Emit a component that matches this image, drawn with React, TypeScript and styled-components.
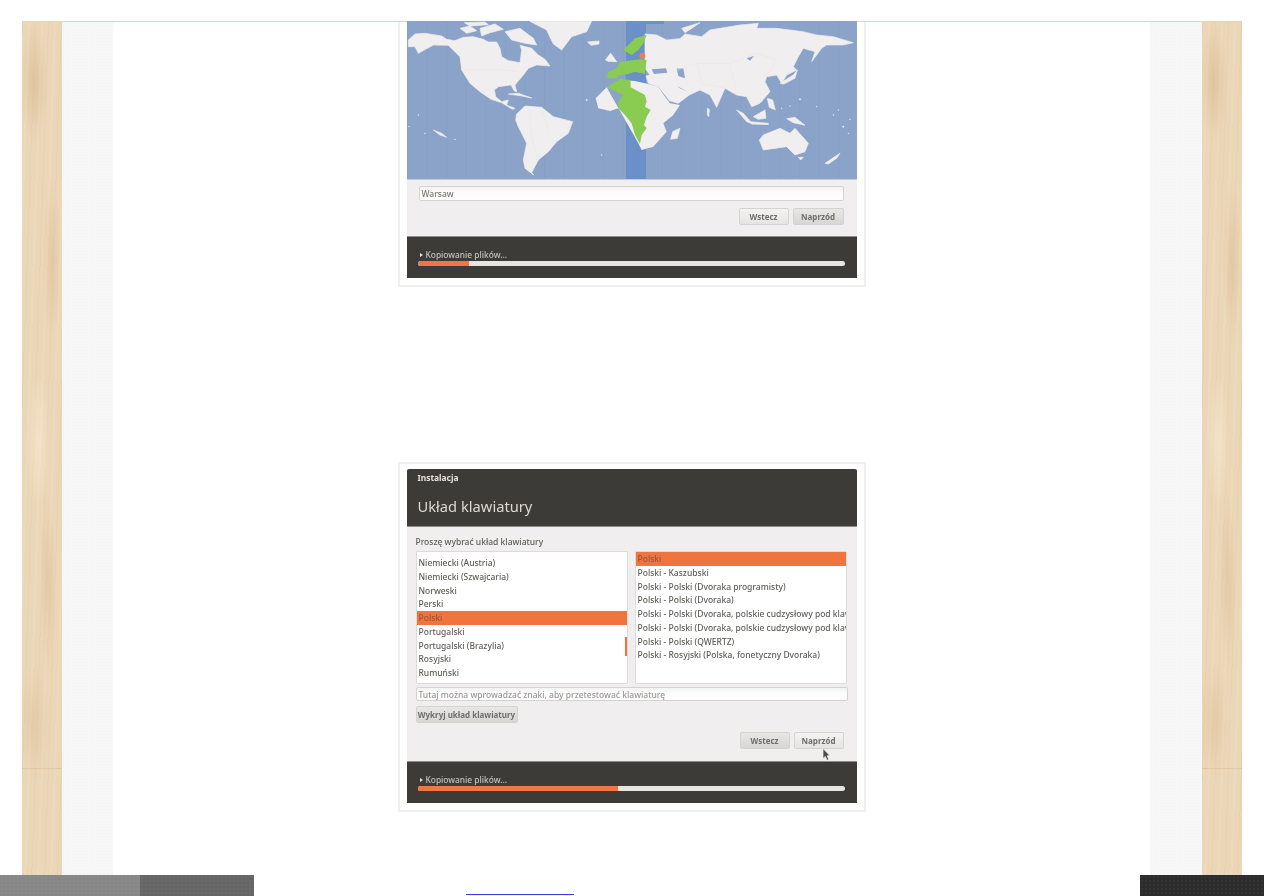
import React from "react";
import styled, { createGlobalStyle } from "styled-components";

const GlobalStyle = createGlobalStyle`
  html, body {
    margin: 0;
    padding: 0;
    background: #fff;
    overflow: hidden;
  }
`;

const woodTexture = `
  linear-gradient(180deg, transparent 0 746px, rgba(190,150,100,.22) 746px 747px, transparent 747px),
  radial-gradient(14px 60px at 30% 60px, rgba(205,170,125,.4), transparent),
  radial-gradient(10px 80px at 75% 240px, rgba(205,170,125,.3), transparent),
  radial-gradient(12px 70px at 40% 420px, rgba(255,240,220,.45), transparent),
  radial-gradient(8px 90px at 65% 560px, rgba(205,170,125,.32), transparent),
  radial-gradient(16px 60px at 30% 700px, rgba(205,170,125,.25), transparent),
  repeating-linear-gradient(92deg, rgba(205,170,125,.1) 0 1px, transparent 1px 6px, rgba(255,245,225,.12) 6px 8px, transparent 8px 13px)
`;

const Shell = styled.div`
  box-sizing: border-box;
  height: 896px;
  margin: 0 22px;
  padding-top: 21px;
  display: flex;
  flex-direction: column;
  overflow: hidden;
  font-family: "Noto Sans", "Open Sans", sans-serif;
`;

const TopRule = styled.div`
  height: 1px;
  flex: none;
  background: #e8d0b0;
`;

const Frame = styled.div`
  flex: 1;
  display: grid;
  grid-template-columns: 40px 51px 1037px 52px 40px;
  min-height: 0;
`;

const Wood = styled.div`
  background-color: #ebd6b7;
  background-image: ${woodTexture};
`;

const Margin = styled.div`
  background-color: #f7f7f7;
  background-image: radial-gradient(circle, #f3f3f3 0.6px, transparent 0.7px);
  background-size: 3px 3px;
`;

const Content = styled.main`
  background: #fff;
  display: flex;
  flex-direction: column;
  align-items: center;
  min-width: 0;
`;

const Card = styled.figure<{ $clipped?: boolean }>`
  box-sizing: border-box;
  width: 468px;
  margin: ${(p) => (p.$clipped ? "0 0 175px" : "0")};
  padding: ${(p) => (p.$clipped ? "0 7px 7px" : "5px 7px 7px")};
  border: 2px solid #efefef;
  border-top-width: ${(p) => (p.$clipped ? 0 : 2)}px;
  background: #fff;
  flex: none;
`;

const Screen = styled.div<{ $raised?: boolean }>`
  width: 450px;
  margin-top: ${(p) => (p.$raised ? -1 : 0)}px;
  background: #f0eeee;
  color: #5e5d59;
  font-size: 8.5px;
  font-weight: 500;
  line-height: 13.75px;
  filter: blur(0.6px);
  overflow: hidden;
`;

const Header = styled.header`
  box-sizing: border-box;
  height: 58px;
  padding: 2px 11px 0;
  background: #3c3b37;
  border-bottom: 1px solid #8d8c88;
  border-radius: 2px 2px 0 0;
  color: #e6e3de;
`;

const AppName = styled.div`
  font-size: 8.4px;
  font-weight: 700;
`;

const Title = styled.h1`
  margin: 10px 0 0;
  font-size: 14.7px;
  line-height: 22px;
  font-weight: 400;
  color: #dcd9d2;
`;

const Body = styled.div`
  box-sizing: border-box;
  height: 234px;
  padding: 8px 10px 0 9px;
  display: flex;
  flex-direction: column;
`;

const Prompt = styled.div`
  height: 16px;
`;

const Lists = styled.div`
  display: flex;
  gap: 7px;
`;

const List = styled.ul<{ $inset: number }>`
  position: relative;
  box-sizing: border-box;
  width: 212px;
  height: 133px;
  margin: 0;
  padding: ${(p) => p.$inset}px 0 0;
  list-style: none;
  overflow: hidden;
  background: #fff;
  border: 1px solid #dedcdb;
  border-radius: 1px;
`;

const Row = styled.li<{ $selected?: boolean }>`
  height: 13.75px;
  padding: 0 2px;
  white-space: nowrap;
  overflow: hidden;
  background: ${(p) => (p.$selected ? "#f0743e" : "transparent")};
  color: ${(p) => (p.$selected ? "#96573a" : "inherit")};
`;

const ScrollThumb = styled.span`
  position: absolute;
  right: 0;
  top: 85px;
  width: 2px;
  height: 19px;
  background: #f0743e;
`;

const TextField = styled.div<{ $wide?: boolean; $muted?: boolean }>`
  box-sizing: border-box;
  height: ${(p) => (p.$wide ? 14 : 15)}px;
  margin: ${(p) => (p.$wide ? "3px -1px 0 0" : "0")};
  padding: 0 2px;
  line-height: 13px;
  background: linear-gradient(180deg, #f4f3f3, #fdfdfd 50%);
  border: 1px solid #d5d3d1;
  border-radius: 2px;
  color: ${(p) => (p.$muted ? "#9a9996" : "#77766f")};
`;

const Button = styled.div<{ $width: number; $pressed?: boolean }>`
  box-sizing: border-box;
  width: ${(p) => p.$width}px;
  height: 17px;
  line-height: 15px;
  text-align: center;
  font-weight: 700;
  font-size: 8px;
  border: 1px solid #d5d3d1;
  border-radius: 2px;
  background: ${(p) =>
    p.$pressed ? "linear-gradient(180deg, #e9e7e6, #d8d6d4)" : "linear-gradient(180deg, #f4f3f2, #e6e4e3)"};
  color: #6f6e6a;
`;

const DetectRow = styled.div`
  margin-top: 5px;
`;

const Actions = styled.div<{ $top: number; $trail: number }>`
  position: relative;
  display: flex;
  justify-content: flex-end;
  gap: 4px;
  margin-top: ${(p) => p.$top}px;
  padding-right: ${(p) => p.$trail}px;
`;

const Pointer = styled.svg`
  position: absolute;
  left: 406px;
  top: 16px;
  width: 9px;
  height: 13px;
`;

const Footer = styled.footer`
  box-sizing: border-box;
  height: 42px;
  padding: 11px 12px 0 11px;
  background: #3c3b37;
  border-top: 1px solid #8d8c88;
  color: #c4c2bc;
`;

const Status = styled.div`
  display: flex;
  align-items: center;
  gap: 3px;
  height: 13px;
  line-height: 13px;
  font-size: 8.4px;
  padding-left: 2px;
`;

const Caret = styled.i`
  width: 0;
  height: 0;
  border-left: 3px solid #e3e1dc;
  border-top: 2.5px solid transparent;
  border-bottom: 2.5px solid transparent;
`;

const Track = styled.div`
  height: 5px;
  background: #e7e5e2;
  border-radius: 3px;
  overflow: hidden;
`;

const Fill = styled.div`
  height: 100%;
  background: #ee7743;
`;

const MapBox = styled.div`
  height: 158px;
  background: #8ba3c8;
  border-bottom: 1px solid #c5cddc;
`;

const MapBody = styled.div`
  box-sizing: border-box;
  height: 57px;
  padding: 7px 13px 0 12px;
  margin-top: -1px;
`;

const MapSvg = styled.svg`
  display: block;
  width: 450px;
  height: 158px;
`;

const Link = styled.a`
  display: block;
  flex: none;
  width: 108px;
  height: 1px;
  margin: 82px 0 0 -224px;
  background: #3c3ce0;
`;

const BottomBar = styled.div`
  position: fixed;
  left: 0;
  right: 0;
  bottom: 0;
  height: 21px;
  display: flex;
`;

const BarSegment = styled.div<{ $width: number; $color: string; $push?: boolean }>`
  width: ${(p) => p.$width}px;
  margin-left: ${(p) => (p.$push ? "auto" : "0")};
  background-color: ${(p) => p.$color};
  background-image: radial-gradient(circle, rgba(255, 255, 255, 0.04) 0.7px, transparent 0.8px);
  background-size: 4px 4px;
`;

const land = "#f0eeee";
const sea = "#8ba3c8";

const WorldMap = () => (
  <MapSvg viewBox="0 -1 450 158" aria-hidden="true">
    <defs>
      <pattern id="zones" width="19.6" height="158" patternUnits="userSpaceOnUse">
        <rect x="0" width="1" height="158" fill="#7f98c0" opacity=".3" />
      </pattern>
    </defs>
    <rect y="-1" width="450" height="158" fill={sea} />
    <rect y="-1" width="450" height="158" fill="url(#zones)" />
    <rect x="219" y="-1" width="20" height="158" fill="#6b8fc7" />
    <rect x="219" y="-1" width="38" height="3" fill="#6b8fc7" />

    {/* Americas */}
    <g transform="translate(-2 -2) scale(.3333)" fill={land} stroke={land} strokeWidth="2" strokeLinejoin="round">
      <path d="M10 60L30 42L60 40L110 48L125 58L150 62L175 52L205 50L235 58L250 66L275 66L285 85L290 110L310 122L345 128L350 90L345 76L380 85L400 105L420 118L435 138L395 135L370 145L355 165L330 195L335 215L328 213L318 195L280 200L268 210L272 230L290 245L310 240L305 255L330 265L322 268L290 248L258 238L225 215L195 190L170 150L165 110L130 76L85 75L40 100L30 80L10 80Z" />
      <path d="M165 25L195 18L215 32L185 40Z" />
      <path d="M225 25L270 12L295 28L255 38L230 48Z" />
      <path d="M300 35L345 25L385 55L395 75L360 70L320 60Z" />
      <path d="M178 8L240 6L250 14L195 18Z" />
      <path d="M375 4L560 4L545 35L500 50L470 90L445 72L425 30Z" />
      <path d="M548 66L582 63L582 72L558 76Z" />
      <path d="M335 282L360 258L410 262L445 290L503 305L490 340L455 365L430 395L400 420L380 458L386 465L360 445L355 420L365 370L340 320L332 300Z" />
      <path d="M310 222L340 220L380 234L350 228Z" />
      <path d="M85 330L110 340L125 352L105 345Z" />
      <circle cx="40" cy="285" r="1" /><circle cx="12" cy="320" r="1" /><circle cx="150" cy="358" r="1" />
      <circle cx="60" cy="340" r="1" /><circle cx="545" cy="240" r="2" /><circle cx="590" cy="405" r="1" />
    </g>

    {/* Asia, Australia, islands */}
    <g transform="translate(223 -2) scale(.3333)" fill={land} stroke={land} strokeWidth="2" strokeLinejoin="round">
      <path d="M45 42L80 45L110 60L150 56L165 42L215 50L240 30L270 25L330 15L385 10L380 25L440 25L480 30L520 35L560 45L610 50L670 68L640 75L590 75L575 85L545 125L555 95L520 85L505 110L490 140L500 150L470 165L455 190L440 165L410 170L405 185L420 215L390 250L365 260L350 230L320 225L285 205L260 262L240 225L210 210L178 225L145 250L110 240L85 200L55 190L48 168L60 165L45 145Z" />
      <path d="M155 25L210 8L190 22L165 38Z" />
      <path d="M450 190L490 165L502 150L495 175L462 192Z" />
      <path d="M122 358L128 335L150 325L142 355Z" />
      <path d="M232 265L238 268L236 290L232 285Z" />
      <path d="M370 290L405 270L408 295L385 298Z" />
      <path d="M320 270L340 280L368 312L350 305Z" />
      <path d="M360 305L415 310L415 314L365 312Z" />
      <path d="M470 296L495 292L525 316L490 308Z" />
      <path d="M412 235L428 240L436 270L418 262Z" />
      <path d="M388 360L400 345L450 325L480 340L495 325L535 370L525 395L495 405L470 380L400 390Z" />
      <path d="M505 412L520 412L512 420Z" />
      <path d="M585 430L630 400L620 415L595 432Z" />
      <circle cx="480" cy="258" r="1" /><circle cx="510" cy="238" r="2" /><circle cx="560" cy="260" r="1" />
      <circle cx="625" cy="270" r="1" /><circle cx="640" cy="320" r="2" /><circle cx="660" cy="298" r="1" />
      <circle cx="610" cy="285" r="1" /><circle cx="655" cy="340" r="1" /><circle cx="455" cy="265" r="1" />
    </g>
    <g transform="translate(223 -2) scale(.3333)" fill={sea}>
      <path d="M65 148L108 145L112 158L72 162Z" />
      <path d="M140 146L160 145L165 175L145 168Z" />
      <path d="M350 115L372 108L360 122Z" />
      <path d="M85 200L120 245L112 240L82 205Z" />
      <path d="M140 198L175 215L150 205Z" />
    </g>
    {/* country borders */}
    <g transform="translate(223 -2) scale(.3333)" fill="none" stroke="#e7e5e4" strokeWidth="1.5">
      <path d="M130 155L200 130L300 130L380 100L440 120L410 170" />
      <path d="M200 130L215 190L285 205M300 130L320 225" />
    </g>
    <g transform="translate(-2 -2) scale(.3333)" fill="none" stroke="#e7e5e4" strokeWidth="1.5">
      <path d="M105 48L130 76M170 150L300 150L340 155M225 215L270 205" />
      <path d="M375 280L380 350L400 420M410 262L430 330" />
    </g>

    {/* Africa and Europe, highlighted zone on top */}
    <g transform="translate(-17 -22) scale(.3333)">
      <path fill={land} d="M650 262L617 295L625 325L660 333L685 325L722 240L765 250L805 260L825 290L840 310L870 315L850 345L820 370L830 395L790 440L755 450L745 430Z" />
      <path fill={land} d="M645 180L662 158L682 186L655 185Z" />
      <path fill="#6b8fc7" d="M707 225L765 225L765 245L707 240Z" />
      <path fill="#8acb52" d="M650 262L690 237L722 240L722 262L765 285L770 305L765 320L782 330L770 350L762 375L770 385L755 405L750 432L735 405L725 370L705 345L685 325L685 305L700 285L680 275Z" />
      <path fill="#8acb52" d="M700 150L735 115L770 105L760 130L745 150L725 165Z" />
      <path fill="#8acb52" d="M650 235L655 215L680 205L690 185L750 178L770 180L765 222L735 215L715 222L690 225L680 235Z" />
      <circle cx="757" cy="168" r="9" fill="#ef7d5a" />
    </g>
  </MapSvg>
);

const Progress = ({ value }: { value: number }) => (
  <Footer>
    <Status>
      <Caret />
      Kopiowanie plików...
    </Status>
    <Track>
      <Fill style={{ width: `${value}%` }} />
    </Track>
  </Footer>
);

const layouts = [
  "Niemiecki (Austria)",
  "Niemiecki (Szwajcaria)",
  "Norweski",
  "Perski",
  "Polski",
  "Portugalski",
  "Portugalski (Brazylia)",
  "Rosyjski",
  "Rumuński",
];

const variants = [
  "Polski",
  "Polski - Kaszubski",
  "Polski - Polski (Dvoraka programisty)",
  "Polski - Polski (Dvoraka)",
  "Polski - Polski (Dvoraka, polskie cudzysłowy pod klav",
  "Polski - Polski (Dvoraka, polskie cudzysłowy pod klav",
  "Polski - Polski (QWERTZ)",
  "Polski - Rosyjski (Polska, fonetyczny Dvoraka)",
];

export default function App() {
  return (
    <>
      <GlobalStyle />
      <Shell>
        <TopRule />
        <Frame>
          <Wood />
          <Margin />
          <Content>
            <Card $clipped>
              <Screen $raised>
                <MapBox>
                  <WorldMap />
                </MapBox>
                <MapBody>
                  <TextField>Warsaw</TextField>
                  <Actions $top={7} $trail={0}>
                    <Button $width={50}>Wstecz</Button>
                    <Button $width={51} $pressed>
                      Naprzód
                    </Button>
                  </Actions>
                </MapBody>
                <Progress value={12} />
              </Screen>
            </Card>

            <Card>
              <Screen>
                <Header>
                  <AppName>Instalacja</AppName>
                  <Title>Układ klawiatury</Title>
                </Header>
                <Body>
                  <Prompt>Proszę wybrać układ klawiatury</Prompt>
                  <Lists>
                    <List $inset={4}>
                      {layouts.map((name) => (
                        <Row key={name} $selected={name === "Polski"}>
                          {name}
                        </Row>
                      ))}
                      <ScrollThumb />
                    </List>
                    <List $inset={0}>
                      {variants.map((name, index) => (
                        <Row key={index} $selected={name === "Polski"}>
                          {name}
                        </Row>
                      ))}
                    </List>
                  </Lists>
                  <TextField $wide $muted>
                    Tutaj można wprowadzać znaki, aby przetestować klawiaturę
                  </TextField>
                  <DetectRow>
                    <Button $width={102} $pressed>
                      Wykryj układ klawiatury
                    </Button>
                  </DetectRow>
                  <Actions $top={9} $trail={3}>
                    <Button $width={50} $pressed>
                      Wstecz
                    </Button>
                    <Button $width={50}>Naprzód</Button>
                    <Pointer viewBox="0 0 9 13">
                      <path d="M1 0.5V10.5L3.3 8.4L5 12.3L6.8 11.5L5.1 7.8H8Z" fill="#4a4a48" stroke="#f4f4f4" strokeWidth=".7" />
                    </Pointer>
                  </Actions>
                </Body>
                <Progress value={47} />
              </Screen>
            </Card>

            <Link href="#" aria-label="link" />
          </Content>
          <Margin />
          <Wood />
        </Frame>
      </Shell>
      <BottomBar>
        <BarSegment $width={140} $color="#878787" />
        <BarSegment $width={114} $color="#666666" />
        <BarSegment $width={124} $color="#2c2c2c" $push />
      </BottomBar>
    </>
  );
}
